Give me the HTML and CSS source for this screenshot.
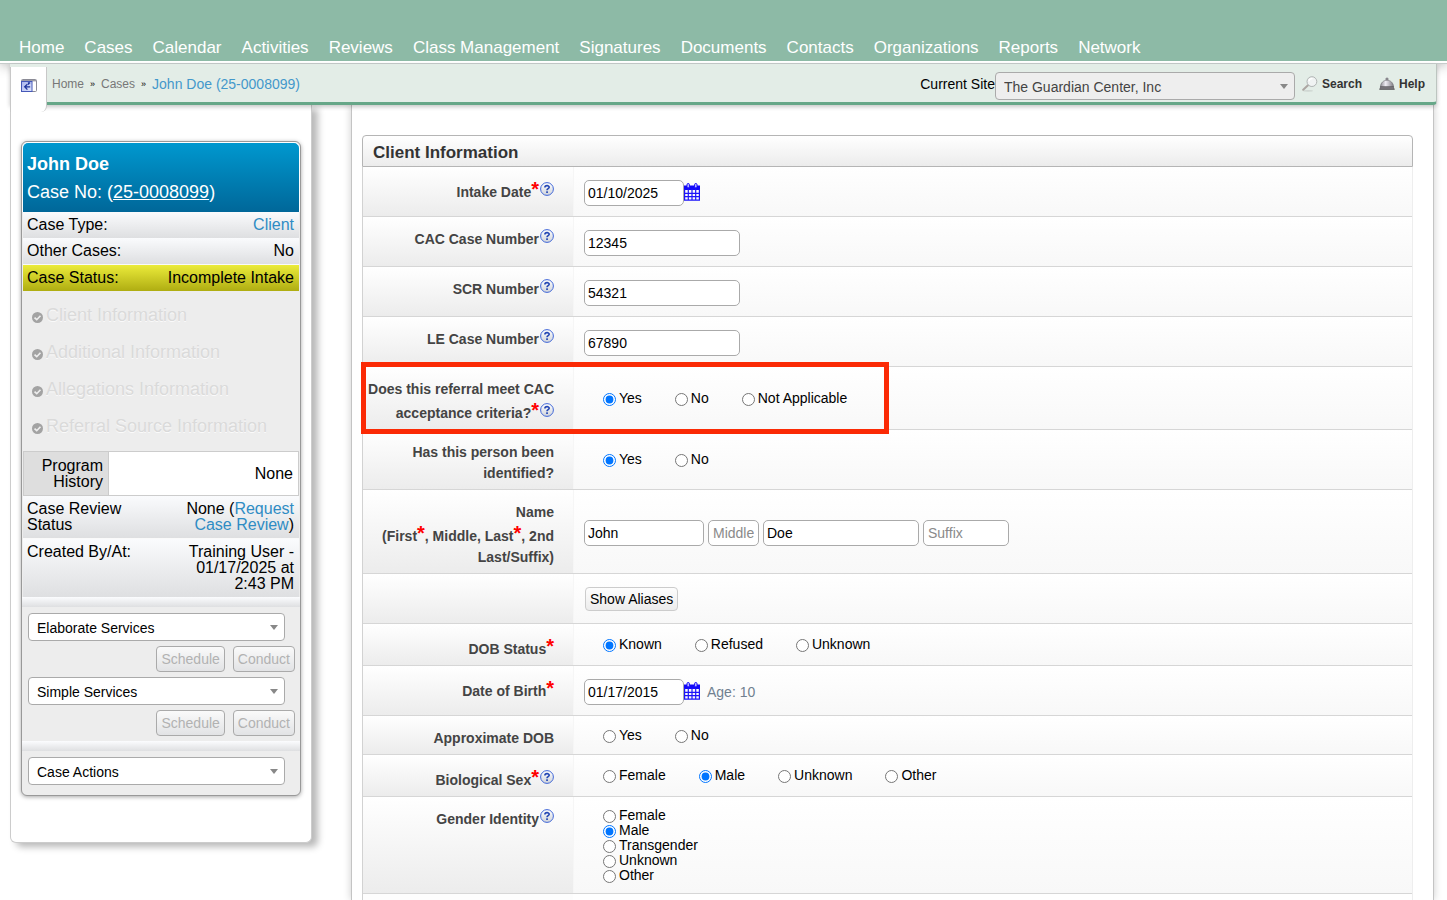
FILE: index.html
```html
<!DOCTYPE html>
<html lang="en">
<head>
<meta charset="utf-8">
<title>John Doe (25-0008099) - Client Information</title>
<link rel="stylesheet" href="styles.css">
</head>
<body>
<svg class="sprite" aria-hidden="true">
  <defs>
    <linearGradient id="glass" x1="0" y1="0" x2="0" y2="1"><stop offset="0" stop-color="#ffffff"/><stop offset="1" stop-color="#cfd3da"/></linearGradient>
    <linearGradient id="bell" x1="0" y1="0" x2="1" y2="0"><stop offset="0" stop-color="#8e8c93"/><stop offset=".4" stop-color="#efedf4"/><stop offset="1" stop-color="#7d7b82"/></linearGradient>
    <linearGradient id="pane" x1="0" y1="0" x2="1" y2="1"><stop offset="0" stop-color="#a8b4ee"/><stop offset="1" stop-color="#dfe5fb"/></linearGradient>
    <symbol id="help" viewBox="0 0 14 14">
      <circle cx="7" cy="7" r="6.4" fill="url(#glass)" stroke="#4167d8"/>
      <path d="M4.9 5.4C4.9 3.1 9.2 3.1 9.2 5.3C9.2 6.7 7 6.7 7 8.3" fill="none" stroke="#2346b4" stroke-width="1.6"/>
      <rect x="6.2" y="9.3" width="1.7" height="1.7" fill="#2346b4"/>
    </symbol>
    <symbol id="calendar" viewBox="0 0 16 18">
      <path d="M0 2.5h16V7H0z" fill="#1208fa"/>
      <path d="M.6 6v11.2h14.8V6M4.3 6v11M8 6v11M11.7 6v11M1 10.3h14M1 13.7h14" fill="none" stroke="#1c14fa" stroke-width="1.2"/>
      <rect x="3" y=".5" width="2.4" height="4.4" rx="1.2" fill="#c9c9ff" stroke="#1208fa"/>
      <rect x="10.6" y=".5" width="2.4" height="4.4" rx="1.2" fill="#c9c9ff" stroke="#1208fa"/>
    </symbol>
    <symbol id="check" viewBox="0 0 10 10">
      <circle cx="5" cy="5" r="5" fill="#a3a3a3"/>
      <path d="M2.3 5.1L4.3 7L7.7 3.4" fill="none" stroke="#eee" stroke-width="1.5"/>
    </symbol>
  </defs>
</svg>

<div class="app">
  <header class="topbar">
    <nav class="menu" aria-label="Main">
      <a href="#">Home</a><a href="#">Cases</a><a href="#">Calendar</a><a href="#">Activities</a><a href="#">Reviews</a><a href="#">Class Management</a><a href="#">Signatures</a><a href="#">Documents</a><a href="#">Contacts</a><a href="#">Organizations</a><a href="#">Reports</a><a href="#">Network</a>
    </nav>
  </header>

  <div class="toolbar">
    <button class="collapse" type="button" aria-label="Collapse panel">
      <svg width="16" height="13" viewBox="0 0 16 13">
        <rect x=".5" y=".5" width="15" height="12" rx="1" fill="#fff" stroke="#8b8b96"/>
        <path d="M1 1h14v1.4H1z" fill="#9b9ba6"/>
        <rect x=".5" y="2.5" width="10.5" height="10" fill="url(#pane)" stroke="#4558b8"/>
        <path d="M9.2 4H7.5v1.8M9.2 7.8H4.2M6.4 5.2L3.7 7.8L6.4 10.6" fill="none" stroke="#1e349c" stroke-width="1.3"/>
      </svg>
    </button>
    <nav class="crumbs" aria-label="Breadcrumb">
      <a href="#">Home</a><span>»</span><a href="#">Cases</a><span>»</span><a class="current" href="#">John Doe (25-0008099)</a>
    </nav>
    <div class="tools">
      <label for="site">Current Site</label>
      <span class="picker site"><select id="site"><option>The Guardian Center, Inc</option></select></span>
      <a class="tool" href="#"><svg width="16" height="16" viewBox="0 0 16 16">
        <ellipse cx="6" cy="14.8" rx="5" ry=".9" fill="#cfd6d2"/>
        <path d="M1.2 13.8L6 9.2" stroke="#aca6a2" stroke-width="2" stroke-linecap="round"/>
        <circle cx="9.9" cy="5.6" r="4.9" fill="#f0f3f3" stroke="#b0b4b4"/>
        <path d="M6.9 5.3C7.2 3.4 8.7 2.5 10.5 2.7" fill="none" stroke="#fff" stroke-width="1.3"/>
      </svg>Search</a>
      <a class="tool help-link" href="#"><svg width="16" height="14" viewBox="0 0 16 14">
        <circle cx="8" cy="2" r="1.6" fill="#8a888e"/>
        <path d="M1.4 10C1.8 1 14.2 1 14.6 10z" fill="url(#bell)" stroke="#77757b" stroke-width=".7"/>
        <path d="M1.4 9.6h13.2l1.2 3.2H.2z" fill="#4c4a4e"/>
        <path d="M1.2 11h13.6" stroke="#b5b3b9" stroke-width=".8"/>
      </svg>Help</a>
    </div>
  </div>

  <div class="workspace">
    <aside class="sidebar">
      <section class="panel">
        <div class="case-head">
          <h1>John Doe</h1>
          <p>Case No: (<a href="#">25-0008099</a>)</p>
        </div>
        <dl class="facts">
          <div class="fact"><dt>Case Type:</dt><dd><a href="#">Client</a></dd></div>
          <div class="fact"><dt>Other Cases:</dt><dd>No</dd></div>
          <div class="fact status"><dt>Case Status:</dt><dd>Incomplete Intake</dd></div>
        </dl>
        <ul class="steps">
          <li><svg width="11" height="11"><use href="#check"/></svg>Client Information</li>
          <li><svg width="11" height="11"><use href="#check"/></svg>Additional Information</li>
          <li><svg width="11" height="11"><use href="#check"/></svg>Allegations Information</li>
          <li><svg width="11" height="11"><use href="#check"/></svg>Referral Source Information</li>
        </ul>
        <dl class="program"><dt>Program History</dt><dd>None</dd></dl>
        <dl class="facts">
          <div class="fact"><dt>Case Review Status</dt><dd>None (<a href="#">Request Case Review</a>)</dd></div>
          <div class="fact"><dt>Created By/At:</dt><dd>Training User - 01/17/2025 at 2:43 PM</dd></div>
        </dl>
        <div class="strip"></div>
        <div class="actions">
          <span class="picker"><select aria-label="Elaborate Services"><option>Elaborate Services</option></select></span>
          <div class="buttons"><button type="button" disabled>Schedule</button><button type="button" disabled>Conduct</button></div>
          <span class="picker"><select aria-label="Simple Services"><option>Simple Services</option></select></span>
          <div class="buttons"><button type="button" disabled>Schedule</button><button type="button" disabled>Conduct</button></div>
        </div>
        <div class="strip"></div>
        <div class="actions last">
          <span class="picker"><select aria-label="Case Actions"><option>Case Actions</option></select></span>
        </div>
      </section>
    </aside>

    <main class="content">
      <h2 class="section-title">Client Information</h2>
      <form class="rows">
        <div class="row">
          <div class="name"><label for="intake">Intake Date</label><span class="req">*</span><svg class="hint"><use href="#help"/></svg></div>
          <div class="value"><input class="text date" id="intake" value="01/10/2025"><button class="cal" type="button" aria-label="Choose intake date"><svg width="16" height="18"><use href="#calendar"/></svg></button></div>
        </div>
        <div class="row">
          <div class="name"><label for="cac">CAC Case Number</label><svg class="hint"><use href="#help"/></svg></div>
          <div class="value"><input class="text" id="cac" value="12345"></div>
        </div>
        <div class="row">
          <div class="name"><label for="scr">SCR Number</label><svg class="hint"><use href="#help"/></svg></div>
          <div class="value"><input class="text" id="scr" value="54321"></div>
        </div>
        <div class="row">
          <div class="name"><label for="le">LE Case Number</label><svg class="hint"><use href="#help"/></svg></div>
          <div class="value"><input class="text" id="le" value="67890"></div>
        </div>
        <div class="row marked">
          <div class="name">Does this referral meet CAC acceptance criteria?<span class="req">*</span><svg class="hint"><use href="#help"/></svg></div>
          <div class="value choices">
            <label><input type="radio" name="criteria" checked>Yes</label>
            <label><input type="radio" name="criteria">No</label>
            <label><input type="radio" name="criteria">Not Applicable</label>
          </div>
        </div>
        <div class="row">
          <div class="name">Has this person been identified?</div>
          <div class="value choices">
            <label><input type="radio" name="identified" checked>Yes</label>
            <label><input type="radio" name="identified">No</label>
          </div>
        </div>
        <div class="row">
          <div class="name">Name<br>(First<span class="req">*</span>, Middle, Last<span class="req">*</span>, 2nd Last/Suffix)</div>
          <div class="value names">
            <input class="text first" aria-label="First" value="John">
            <input class="text middle" aria-label="Middle" placeholder="Middle">
            <input class="text" aria-label="Last" value="Doe">
            <input class="text suffix" aria-label="Suffix" placeholder="Suffix">
          </div>
        </div>
        <div class="row">
          <div class="name"></div>
          <div class="value"><button class="aliases" type="button">Show Aliases</button></div>
        </div>
        <div class="row">
          <div class="name">DOB Status<span class="req">*</span></div>
          <div class="value choices">
            <label><input type="radio" name="dobstatus" checked>Known</label>
            <label><input type="radio" name="dobstatus">Refused</label>
            <label><input type="radio" name="dobstatus">Unknown</label>
          </div>
        </div>
        <div class="row">
          <div class="name"><label for="dob">Date of Birth</label><span class="req">*</span></div>
          <div class="value"><input class="text date" id="dob" value="01/17/2015"><button class="cal" type="button" aria-label="Choose date of birth"><svg width="16" height="18"><use href="#calendar"/></svg></button><span class="age">Age: 10</span></div>
        </div>
        <div class="row">
          <div class="name">Approximate DOB</div>
          <div class="value choices">
            <label><input type="radio" name="approx">Yes</label>
            <label><input type="radio" name="approx">No</label>
          </div>
        </div>
        <div class="row">
          <div class="name">Biological Sex<span class="req">*</span><svg class="hint"><use href="#help"/></svg></div>
          <div class="value choices">
            <label><input type="radio" name="sex">Female</label>
            <label><input type="radio" name="sex" checked>Male</label>
            <label><input type="radio" name="sex">Unknown</label>
            <label><input type="radio" name="sex">Other</label>
          </div>
        </div>
        <div class="row">
          <div class="name">Gender Identity<svg class="hint"><use href="#help"/></svg></div>
          <div class="value choices stacked">
            <label><input type="radio" name="gender">Female</label>
            <label><input type="radio" name="gender" checked>Male</label>
            <label><input type="radio" name="gender">Transgender</label>
            <label><input type="radio" name="gender">Unknown</label>
            <label><input type="radio" name="gender">Other</label>
          </div>
        </div>
        <div class="filler"></div>
      </form>
    </main>
  </div>
</div>
</body>
</html>
```
FILE: styles.css
```css
*, *::before, *::after { box-sizing: border-box; }

body {
  margin: 0;
  background: #fff;
  color: #000;
  font: 14px/20px "Liberation Sans", Arial, sans-serif;
}

h1, h2, p, ul, dl, dd { margin: 0; padding: 0; }
a { color: #2f8cc4; text-decoration: none; }
button, input, select { font: inherit; color: inherit; margin: 0; }
.sprite { position: absolute; width: 0; height: 0; }

.app { display: flex; flex-direction: column; min-height: 100vh; }

/* Top navigation */
.topbar {
  padding: 37px 19px 2px;
  background: #8dbaa6;
  border-bottom: 2px solid #fff;
  box-shadow: 0 1px 0 #c6cccb, 0 2px 12px rgba(0, 0, 0, .3);
}
.menu { display: flex; gap: 20px; font-size: 17px; line-height: 22px; white-space: nowrap; }
.menu a { color: #fff; }

/* Breadcrumb bar */
.toolbar {
  position: relative;
  z-index: 1;
  display: flex;
  align-items: center;
  justify-content: space-between;
  height: 41px;
  margin: 1px 10px 0;
  padding: 2px 11px 0 42px;
  background: #e3ede7;
  border-right: 1px solid #bcc5c0;
  border-bottom: 3px solid #66a788;
  border-radius: 0 0 4px 0;
  box-shadow: 0 2px 4px rgba(0, 0, 0, .22);
}
.collapse {
  position: absolute;
  top: 3px;
  left: 0;
  width: 37px;
  height: 45px;
  padding: 0 0 8px;
  background: #fff;
  border: solid #c8c8c8;
  border-width: 0 1px;
  border-radius: 0 0 6px 0;
}
.collapse svg { display: block; margin: 0 auto; }
.crumbs { display: flex; gap: 6px; font-size: 12px; }
.crumbs a { color: #777; }
.crumbs span { font-size: 9px; }
.crumbs .current { font-size: 14px; color: #4398cb; }
.tools { display: flex; align-items: center; }
.tool { display: flex; align-items: center; gap: 4px; margin-left: 7px; font-size: 12px; font-weight: bold; color: #333; }
.help-link { margin-left: 17px; }

/* Drop-downs */
.picker { position: relative; display: block; }
.picker select {
  display: block;
  width: 100%;
  height: 28px;
  padding: 2px 24px 0 8px;
  appearance: none;
  background: #fff;
  border: 1px solid #aaa;
  border-radius: 4px;
}
.picker::after {
  content: "";
  position: absolute;
  top: 12px;
  right: 7px;
  border: solid transparent;
  border-width: 5px 4px 0;
  border-top-color: #888;
}
.site { width: 300px; margin-top: 4px; }
.site select { background: #eee; color: #444; }

/* Page body */
.workspace { display: flex; flex: 1; gap: 39px; margin: 0 13px 0 10px; }

.sidebar {
  flex: 0 0 302px;
  align-self: flex-start;
  padding: 36px 10px 46px;
  background: #fff;
  border: solid #ccc;
  border-width: 0 1px 1px;
  border-radius: 0 0 6px 6px;
  box-shadow: 6px 4px 7px rgba(0, 0, 0, .28);
}
.panel {
  overflow: hidden;
  background: #ededed;
  border: 1px solid #999;
  border-radius: 6px;
  box-shadow: 0 1px 4px rgba(0, 0, 0, .35);
  font-size: 16px;
  line-height: 16px;
}
.case-head {
  padding: 7px 4px 6px;
  background: linear-gradient(#0098cf, #006799);
  border: solid #fff;
  border-width: 1px 1px 0;
  border-radius: 6px 6px 0 0;
  color: #fff;
  font-size: 18px;
  line-height: 28px;
}
.case-head h1 { font-size: 18px; }
.case-head a { color: #fff; text-decoration: underline; }
.fact {
  display: flex;
  justify-content: space-between;
  margin: 0 1px;
  padding: 5px 5px 5px 4px;
  background: linear-gradient(#fafbfd, #dedfe1);
}
.fact:last-child { border-top: 1px solid #fafafa; }
.fact dt { max-width: 112px; }
.fact dd { max-width: 118px; text-align: right; }
.fact.status { background: linear-gradient(#ebeb3a, #afad12); }
.fact.status dd { max-width: none; }
.steps {
  padding: 6px 10px 6px;
  list-style: none;
  font-size: 18px;
  line-height: 37px;
  color: #dadada;
  text-shadow: 0 1px 0 #fafafa;
}
.steps li { display: flex; align-items: center; gap: 3px; white-space: nowrap; }
.steps svg { margin-top: 4px; }
.program { display: flex; margin: 0 1px; background: #fff; border: 1px solid #ccc; }
.program dt { flex: 0 0 85px; padding: 6px 5px 5px; background: #dedede; border-right: 1px solid #ccc; text-align: right; }
.program dd { flex: 1; padding: 14px 5px 0; text-align: right; }
.strip { height: 10px; background: linear-gradient(#fbfcfe, #dedfe1); }
.actions { display: flex; flex-direction: column; gap: 5px; padding: 6px 5px 5px; font-size: 14px; }
.actions.last { padding-bottom: 10px; }
.actions .picker { margin: 0 10px 0 1px; }
.buttons { display: flex; justify-content: flex-end; gap: 8px; }
.buttons button {
  height: 26px;
  padding: 0 4px;
  background: linear-gradient(#fafafa, #e2e3e5);
  border: 1px solid #aaa;
  border-radius: 4px;
  color: #b2b2b2;
}

/* Intake form */
.content {
  display: flex;
  flex: 1;
  flex-direction: column;
  min-width: 0;
  padding: 30px 20px 0 10px;
  background: #fff;
  border: solid #c4c4c4;
  border-width: 0 1px;
  box-shadow: 0 0 8px rgba(0, 0, 0, .2);
}
.section-title {
  padding: 7px 10px 3px;
  background: linear-gradient(#fff, #ececec);
  border: 1px solid #b5b5b5;
  border-radius: 4px 4px 0 0;
  color: #333;
  font-size: 17px;
  line-height: 20px;
}
.rows { display: flex; flex: 1; flex-direction: column; border: solid #d2d2d2; border-width: 0 1px; border-right-color: #eee; }
.row { position: relative; display: grid; grid-template-columns: 210px 1fr; border-bottom: 1px solid #d6d6d6; }
.name {
  padding: 12px 19px 5px 4px;
  background: linear-gradient(#fff, #ececec);
  color: #444;
  font-weight: bold;
  line-height: 21px;
  text-align: right;
}
.req { color: #f00; font-size: 20px; vertical-align: 1px; }
.hint { width: 14px; height: 14px; margin-left: 1px; vertical-align: 1px; }
.value {
  display: flex;
  align-items: center;
  padding: 11px 11px 10px 10px;
  background: linear-gradient(#fff, #f8f8f8);
  border-left: 1px solid #f6f6f6;
}
.text {
  width: 156px;
  height: 26px;
  margin-top: 2px;
  padding: 0 4px 1px 3px;
  background: #fff;
  border: 1px solid #aaa;
  border-radius: 5px;
}
.text::placeholder { color: #8a8a8a; }
.date { width: 100px; }
.cal { padding: 0; background: none; border: 0; }
.cal svg { display: block; }
.age { padding: 2px 0 0 7px; color: #708090; }
.names { gap: 4px; }
.first { width: 120px; }
.middle { width: 51px; padding-left: 4px; }
.suffix { width: 86px; padding-left: 4px; }
.aliases {
  height: 24px;
  margin: 2px 0 2px 1px;
  padding: 0 4px;
  background: linear-gradient(#fdfdfd, #ececec);
  border: 1px solid #ccc;
  border-radius: 4px;
}
.choices { gap: 33px; padding: 0 11px 0 29px; line-height: 15px; }
.choices label { display: flex; align-items: center; gap: 3px; }
.choices input { width: 13px; height: 13px; margin: 2px 0 0; accent-color: #0075ff; }
.stacked { flex-direction: column; align-items: flex-start; gap: 0; padding-top: 11px; padding-bottom: 10px; }

/* Highlight frame drawn over the row under review */
.marked::after {
  content: "";
  position: absolute;
  z-index: 1;
  top: -5px;
  bottom: -5px;
  left: -2px;
  width: 528px;
  border: 5px solid #fb2a05;
  pointer-events: none;
}
.filler { flex: 1; background: linear-gradient(90deg, #fdfdfd 210px, #fff 210px); }
```
